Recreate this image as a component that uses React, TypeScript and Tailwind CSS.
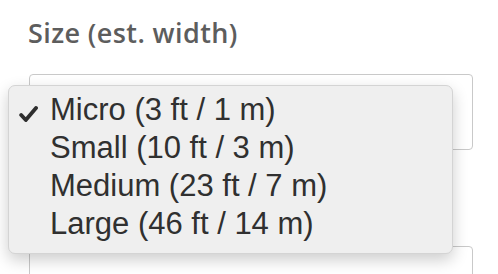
export default function App() {
  const options = [
    'Micro (3 ft / 1 m)',
    'Small (10 ft / 3 m)',
    'Medium (23 ft / 7 m)',
    'Large (46 ft / 14 m)',
  ]

  return (
    <div className="relative h-[274px] w-[498px] overflow-hidden bg-white pl-[28px] pr-[25px]">
      {/* Label */}
      <div className="pt-[17px] font-['Open_Sans','Lato',sans-serif] text-[27px] font-semibold leading-[32px] tracking-[0.4px] text-[#5d5d5d]">
        Size (est. width)
      </div>

      {/* Select box */}
      <div className="relative ml-[1px] mt-[25px] h-[76px] rounded-[4px] border border-[#c9c9c9] bg-white">
        <span className="absolute right-[20px] top-[31px] h-[2px] w-[2px] bg-[#d63a5a]" />
      </div>

      {/* Next input */}
      <div className="ml-[1px] mt-[96px] h-[40px] rounded-t-[4px] border border-[#c9c9c9] bg-white" />

      {/* Native dropdown menu */}
      <div className="absolute left-[8px] top-[85px] w-[445px] rounded-[7px] border border-[#d4d4d4] bg-[#efefef] pb-[10px] pl-[41px] pt-[5px] font-['Liberation_Sans',Arial,sans-serif] text-[31px] leading-[38px] text-[#303030] shadow-[0_6px_16px_rgba(0,0,0,0.2)]">
        {options.map((opt, i) => (
          <div key={opt} className="relative whitespace-nowrap">
            {i === 0 && (
              <svg
                className="absolute left-[-31px] top-[15px]"
                width="19"
                height="16"
                viewBox="0 0 19 16"
                fill="none"
              >
                <path
                  d="M2.2 9 L6.8 14 L17 2"
                  stroke="#2e2e2e"
                  strokeWidth="3.8"
                  strokeLinecap="round"
                  strokeLinejoin="round"
                />
              </svg>
            )}
            {opt}
          </div>
        ))}
      </div>
    </div>
  )
}
